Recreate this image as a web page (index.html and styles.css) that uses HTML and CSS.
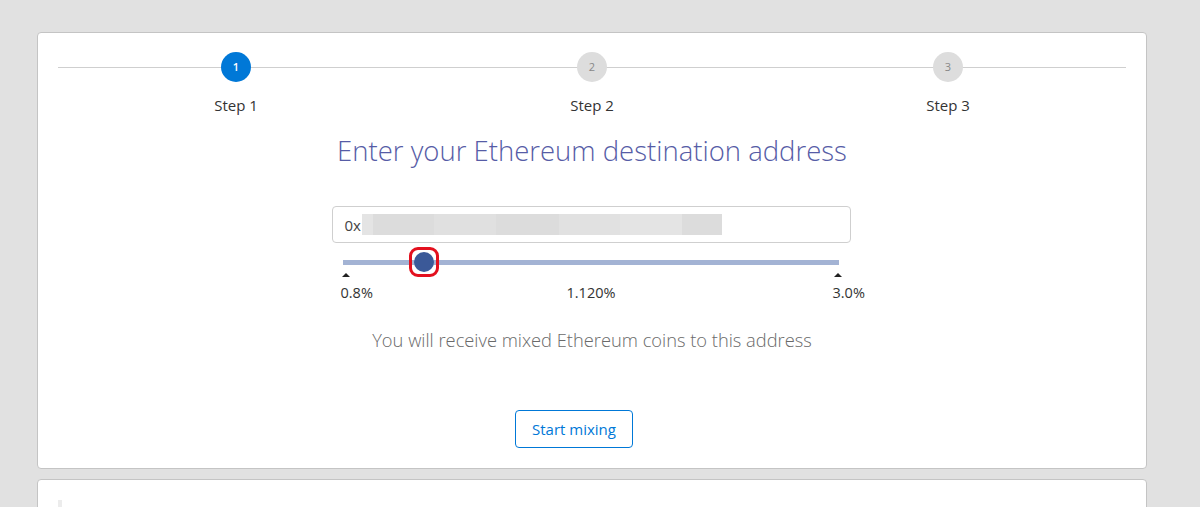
FILE: index.html
```html
<!DOCTYPE html>
<html>
<head>
  <meta charset="utf-8">
  <link rel="stylesheet" href="styles.css">
</head>
<body>
  <div class="card">
    <div class="stepper">
      <div class="step step-active">
        <div class="step-circle">1</div>
        <div class="step-label">Step 1</div>
      </div>
      <div class="step">
        <div class="step-circle">2</div>
        <div class="step-label">Step 2</div>
      </div>
      <div class="step">
        <div class="step-circle">3</div>
        <div class="step-label">Step 3</div>
      </div>
    </div>

    <h2 class="heading">Enter your Ethereum destination address</h2>

    <div class="form">
      <div class="address-input">
        <span class="prefix">0x</span>
        <span class="masked"></span>
      </div>

      <div class="slider">
        <div class="track"></div>
        <div class="thumb-ring" style="left: 81px;">
          <div class="thumb"></div>
        </div>
      </div>

      <div class="scale">
        <div class="mark">
          <span class="tick"></span>
          <span class="mark-label">0.8%</span>
        </div>
        <div class="mark-center">1.120%</div>
        <div class="mark">
          <span class="tick"></span>
          <span class="mark-label">3.0%</span>
        </div>
      </div>
    </div>

    <p class="hint">You will receive mixed Ethereum coins to this address</p>

    <div class="actions">
      <button class="btn-outline">Start mixing</button>
    </div>
  </div>

  <div class="card card-next">
    <div class="quote"></div>
  </div>
</body>
</html>
```

FILE: styles.css
```css
body {
  margin: 0;
  background: #e1e1e1;
  font-family: 'Open Sans', 'Noto Sans', sans-serif;
  color: #333;
  overflow: hidden;
}

.card {
  width: 1068px;
  margin: 32px 0 0 37px;
  padding: 19px 20px 20px 20px;
  background: #fff;
  border: 1px solid #c4c4c4;
  border-radius: 4px;
}

.card-next {
  margin-top: 10px;
  min-height: 120px;
}

.quote {
  width: 4px;
  height: 60px;
  margin-top: 1px;
  background: #ececec;
}

/* stepper */

.stepper {
  display: flex;
  background: linear-gradient(#cfcfcf, #cfcfcf) 0 15px / 100% 1px no-repeat;
}

.step {
  flex: 1;
  display: flex;
  flex-direction: column;
  align-items: center;
}

.step-circle {
  width: 30px;
  height: 30px;
  border-radius: 50%;
  background: #dddddd;
  color: #888;
  font-size: 11px;
  line-height: 30px;
  text-align: center;
}

.step-active .step-circle {
  background: #0078d7;
  color: #fff;
  font-weight: 600;
}

.step-label {
  margin-top: 13px;
  font-size: 15px;
  line-height: 20px;
  color: #333;
}

.heading {
  margin: 18px 0 0 0;
  text-align: center;
  font-size: 27.5px;
  font-weight: 300;
  line-height: 36px;
  color: #565ca6;
}

/* address form */

.form {
  width: 519px;
  margin: 37px auto 0 auto;
  position: relative;
  left: -1px;
}

.address-input {
  display: flex;
  align-items: center;
  height: 35px;
  padding: 0 12px;
  border: 1px solid #cfcfcf;
  border-radius: 4px;
}

.prefix {
  font-size: 15px;
  color: #444;
}

.masked {
  width: 360px;
  height: 21px;
  margin-left: 1px;
  background: linear-gradient(to right,
    #e4e4e4 0px, #e4e4e4 11px,
    #dcdcdc 11px, #dcdcdc 72px,
    #e0e0e0 72px, #e0e0e0 134px,
    #dcdcdc 134px, #dcdcdc 197px,
    #e1e1e1 197px, #e1e1e1 258px,
    #e4e4e4 258px, #e4e4e4 320px,
    #dcdcdc 320px, #dcdcdc 360px);
}

.slider {
  position: relative;
  width: 496px;
  height: 20px;
  margin: 9px 0 0 11px;
  display: flex;
  align-items: center;
}

.track {
  width: 100%;
  height: 5px;
  background: #a3b3d4;
}

.thumb-ring {
  position: absolute;
  top: -5px;
  width: 20px;
  height: 20px;
  padding: 2px;
  margin-left: -15px;
  border: 3px solid #e3101e;
  border-radius: 9px;
}

.thumb {
  width: 20px;
  height: 20px;
  border-radius: 50%;
  background: #3b5998;
}

.scale {
  display: flex;
  justify-content: space-between;
  width: 501px;
  margin: 1px 0 0 9px;
}

.mark {
  width: 9px;
  display: flex;
  flex-direction: column;
}

.tick {
  width: 0;
  height: 0;
  margin-left: 1px;
  border-left: 4px solid transparent;
  border-right: 4px solid transparent;
  border-bottom: 4px solid #222;
}

.mark-label,
.mark-center {
  white-space: nowrap;
  font-size: 14.5px;
  line-height: 20px;
  color: #333;
}

.mark-label {
  margin-top: 6px;
}

.mark-center {
  margin-top: 10px;
}

.hint {
  margin: 25px 0 0 0;
  text-align: center;
  font-size: 18.3px;
  font-weight: 300;
  line-height: 24px;
  color: #6a6a6a;
}

.actions {
  display: flex;
  justify-content: center;
  padding-right: 36px;
  margin-top: 58px;
}

.btn-outline {
  height: 38px;
  padding: 0 16px;
  font-family: 'Open Sans', 'Noto Sans', sans-serif;
  font-size: 15px;
  color: #0078d7;
  background: #fff;
  border: 1px solid #0078d7;
  border-radius: 4px;
  cursor: pointer;
}
```
